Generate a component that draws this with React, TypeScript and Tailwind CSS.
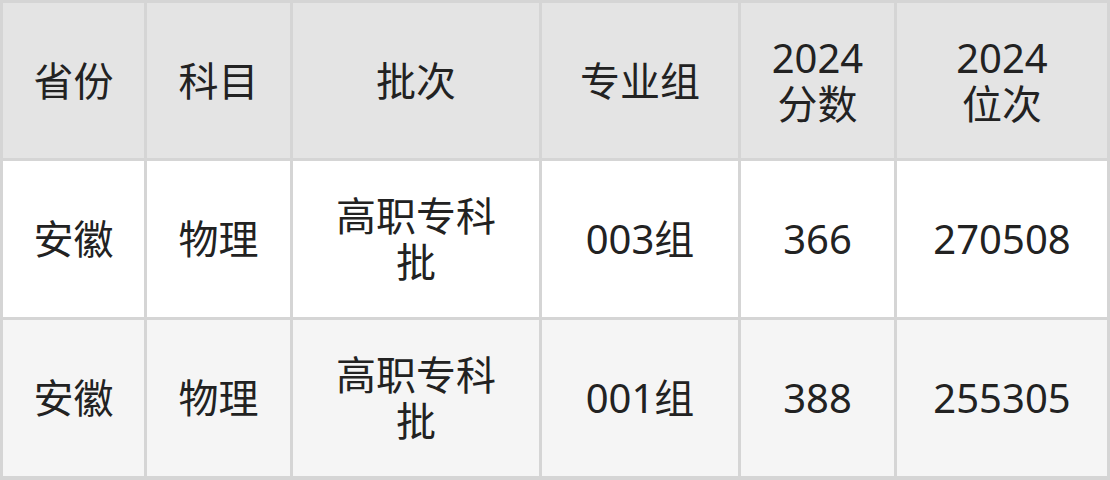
import React from 'react';

const headers: string[][] = [['省份'], ['科目'], ['批次'], ['专业组'], ['2024', '分数'], ['2024', '位次']];

const rows = [
    ['安徽', '物理', '高职专科批', '003组', '366', '270508'],
    ['安徽', '物理', '高职专科批', '001组', '388', '255305'],
];

const App: React.FC = () => {
    return (
        <div
            className="w-[1110px] h-[480px] bg-[#d5d5d5] p-[3px] grid grid-cols-[141px_143px_246px_196px_153px_210px] grid-rows-[155px_156px_156px] gap-[3px] text-[40px] leading-[46px] text-[#222]"
            style={{ fontFamily: '"Noto Sans", "Noto Sans CJK SC", sans-serif' }}
        >
            {headers.map((h) => (
                <div key={h.join('')} className="bg-[#e4e4e4] flex flex-col items-center justify-center text-center px-[28px]">
                    {h.map((line) => (
                        <span key={line}>{line}</span>
                    ))}
                </div>
            ))}
            {rows.map((row, i) =>
                row.map((cell, j) => (
                    <div
                        key={`${i}-${j}`}
                        className={`${i === 1 ? 'bg-[#f5f5f5]' : 'bg-white'} flex items-center justify-center text-center px-[28px]`}
                    >
                        {cell}
                    </div>
                ))
            )}
        </div>
    );
};

export default App;
